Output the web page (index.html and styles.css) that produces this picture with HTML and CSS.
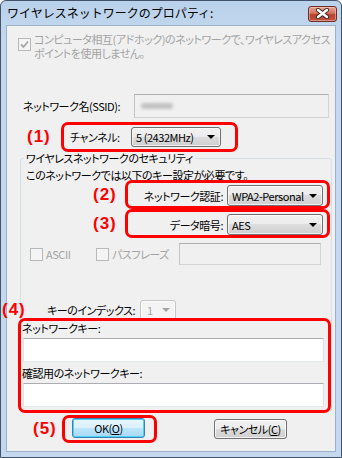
FILE: index.html
```html
<!DOCTYPE html>
<html lang="ja">
<head>
  <meta charset="UTF-8">
  <title>ワイヤレスネットワークのプロパティ</title>
  <link rel="stylesheet" href="styles.css">
</head>
<body>
  <div class="window">
    <div class="titlebar">
      <span class="title">ワイヤレスネットワークのプロパティ:</span>
      <span class="close-btn">
        <svg width="15" height="11" viewBox="0 0 15 11">
          <path d="M3 2 L12 9 M12 2 L3 9" stroke="#3a2a28" stroke-width="4.2" stroke-linecap="round"/>
          <path d="M3 2 L12 9 M12 2 L3 9" stroke="#fff" stroke-width="2.4" stroke-linecap="round"/>
        </svg>
      </span>
    </div>

    <div class="client">
      <div class="adhoc-row">
        <span class="checkbox disabled">
          <svg width="11" height="11" viewBox="0 0 11 11"><path d="M2 5.5 L4.5 8 L9 2.5" fill="none" stroke="#a7a7a7" stroke-width="1.8"/></svg>
        </span>
        <p class="adhoc-text disabled-text">コンピュータ相互(アドホック)のネットワークで、ワイヤレスアクセス<br>ポイントを使用しません。</p>
      </div>

      <div class="ssid-row">
        <span class="ssid-label">ネットワーク名(SSID):</span>
        <div class="textbox readonly ssid-box"><span class="blurred"></span></div>
      </div>

      <div class="anno-row channel-row">
        <span class="anno-num">(1)</span>
        <div class="red-box channel-box">
          <span class="channel-label">チャンネル:</span>
          <div class="combo channel-combo"><span>5 (2432MHz)</span><i class="arrow"></i></div>
        </div>
      </div>

      <fieldset class="security">
        <legend>ワイヤレスネットワークのセキュリティ</legend>
        <p class="security-note">このネットワークでは以下のキー設定が必要です。</p>

        <div class="anno-row setting-row auth-row">
          <span class="anno-num">(2)</span>
          <div class="red-box setting-box">
            <span class="setting-label">ネットワーク認証:</span>
            <div class="combo setting-combo"><span>WPA2-Personal</span><i class="arrow"></i></div>
          </div>
        </div>

        <div class="anno-row setting-row cipher-row">
          <span class="anno-num">(3)</span>
          <div class="red-box setting-box">
            <span class="setting-label">データ暗号:</span>
            <div class="combo setting-combo"><span>AES</span><i class="arrow"></i></div>
          </div>
        </div>

        <div class="ascii-row">
          <label class="check-item ascii-item"><span class="checkbox disabled"></span><span class="disabled-text">ASCII</span></label>
          <label class="check-item pass-item"><span class="checkbox disabled"></span><span class="disabled-text">パスフレーズ</span></label>
          <div class="textbox readonly pass-box"></div>
        </div>

        <div class="index-row">
          <span class="anno-num">(4)</span>
          <span class="index-label">キーのインデックス:</span>
          <div class="combo disabled-combo index-combo"><span>1</span><i class="arrow"></i></div>
        </div>

        <div class="red-box key-box">
          <p class="key-label">ネットワークキー:</p>
          <div class="textbox key-input"></div>
          <p class="key-label confirm-label">確認用のネットワークキー:</p>
          <div class="textbox key-input"></div>
        </div>
      </fieldset>

      <div class="anno-row button-row">
        <span class="anno-num">(5)</span>
        <div class="red-box ok-box">
          <button class="btn btn-default">OK(<u>O</u>)</button>
        </div>
        <button class="btn btn-cancel">キャンセル(<u>C</u>)</button>
      </div>
    </div>
  </div>
</body>
</html>
```

FILE: styles.css
```css
* {
  margin: 0;
  padding: 0;
  box-sizing: border-box;
}

body {
  font-family: "Noto Sans CJK JP", "Noto Sans", sans-serif;
  font-size: 11px;
  line-height: 14px;
  letter-spacing: -0.45px;
  color: #000;
  background: #fff;
  white-space: nowrap;
  font-feature-settings: "palt";
}

.window {
  width: 342px;
  height: 458px;
  display: flex;
  flex-direction: column;
  padding: 0 5px 5px;
  border: 1px solid #43536a;
  border-radius: 6px 6px 0 0;
  background: linear-gradient(to bottom, #b9d1ea, #c4d9ef 40px, #c4d9ef);
}

/* title bar */
.titlebar {
  height: 24px;
  flex: none;
  display: flex;
  align-items: center;
  justify-content: space-between;
  padding-left: 1px;
}

.title {
  font-size: 12px;
  font-feature-settings: normal;
  letter-spacing: 0;
  color: #000;
}

.close-btn {
  width: 29px;
  height: 16px;
  margin-right: -1px;
  margin-top: 1px;
  display: flex;
  align-items: center;
  justify-content: center;
  border: 1px solid #6b2e25;
  border-radius: 3px;
  background: linear-gradient(to bottom, #e6a393 0%, #d3735f 45%, #b7402a 55%, #c4553f 100%);
  box-shadow: inset 0 0 0 1px rgba(255, 220, 210, 0.45);
}

/* client area */
.client {
  flex: 1;
  min-height: 0;
  border: 1px solid #9cb1ca;
  background: #f0f0f0;
}

.disabled-text {
  color: #a3a3a3;
}

.checkbox {
  width: 13px;
  height: 13px;
  flex: none;
  display: flex;
  align-items: center;
  justify-content: center;
  border: 1px solid #8e8f8f;
  background: linear-gradient(to bottom right, #e9e9e9, #fafafa);
}

.checkbox.disabled {
  border-color: #b8b8b8;
  background: #f4f4f4;
}

.adhoc-row {
  display: flex;
  gap: 3px;
  padding: 6px 0 0 11px;
}

.adhoc-row .checkbox {
  margin-top: 6px;
}

.textbox {
  border: 1px solid #abadb3;
  border-color: #abadb3 #dbdfe6 #e3e9ef #e2e3ea;
  background: #fff;
}

.textbox.readonly {
  border-color: #b0b0b0 #d4d4d4 #d4d4d4 #c4c4c4;
  background: #f0f0f0;
}

.ssid-row {
  display: flex;
  align-items: center;
  margin-top: 34px;
  padding-left: 16px;
}

.ssid-label {
  width: 111px;
}

.ssid-box {
  width: 195px;
  height: 24px;
  display: flex;
  align-items: center;
  padding-left: 6px;
}

.blurred {
  width: 32px;
  height: 6px;
  background: #c2c2c2;
  border-radius: 3px;
  filter: blur(1.5px);
}

/* red annotations */
.anno-row {
  display: flex;
  align-items: center;
}

.anno-num {
  font-family: "Liberation Sans", sans-serif;
  font-size: 17px;
  font-weight: bold;
  letter-spacing: 1px;
  color: #ff0000;
  flex: none;
}

.red-box {
  position: relative;
  z-index: 1;
  display: flex;
  align-items: center;
  border: 3px solid #ff0000;
  border-radius: 7px;
}

/* combo boxes */
.combo {
  display: flex;
  align-items: center;
  justify-content: space-between;
  padding: 0 5px 0 4px;
  border: 1px solid #707070;
  border-radius: 3px;
  background: linear-gradient(to bottom, #f2f2f2 0%, #ebebeb 50%, #dddddd 50%, #cfcfcf 100%);
  box-shadow: inset 0 0 0 1px rgba(255, 255, 255, 0.7);
}

.arrow {
  width: 0;
  height: 0;
  border-left: 4px solid transparent;
  border-right: 4px solid transparent;
  border-top: 4px solid #000;
}

.disabled-combo {
  border-color: #c5c5c5;
  background: #f4f4f4;
  color: #a3a3a3;
}

.disabled-combo .arrow {
  border-top-color: #a3a3a3;
}

.channel-row {
  margin-top: 4px;
  padding-left: 20px;
}

.channel-row .anno-num {
  width: 34px;
}

.channel-box {
  width: 177px;
  height: 30px;
  padding-left: 6px;
}

.channel-label {
  width: 61px;
}

.channel-combo {
  width: 90px;
  height: 20px;
}

/* security group */
.security {
  margin: -1px 0 0 13px;
  width: 310px;
  padding: 0;
  border: 1px solid #d5dfe5;
  border-radius: 3px;
}

.security legend {
  margin-left: 3px;
  padding: 0 2px;
}

.security-note {
  margin: 3px 0 0 5px;
}

.setting-row {
  justify-content: flex-end;
  margin-right: 1px;
}

.auth-row {
  margin-top: -2px;
}

.setting-row .anno-num {
  width: 32px;
}

.setting-box {
  width: 205px;
  height: 29px;
  justify-content: flex-end;
  gap: 4px;
  padding: 2px 4px 0 0;
}

.setting-combo {
  width: 96px;
  height: 21px;
}

.ascii-row {
  display: flex;
  align-items: center;
  margin-top: 5px;
  padding-left: 9px;
}

.check-item {
  display: flex;
  align-items: center;
  gap: 3px;
}

.ascii-item {
  width: 66px;
}

.pass-item {
  width: 83px;
}

.pass-box {
  width: 142px;
  height: 22px;
}

.index-row {
  display: flex;
  align-items: center;
  margin-top: 35px;
}

.index-row .anno-num {
  width: 45px;
  margin-left: -19px;
}

.index-label {
  width: 93px;
}

.index-combo {
  width: 36px;
  height: 20px;
  padding: 0 5px 0 6px;
}

.key-box {
  display: block;
  width: 313px;
  margin: -2px 0 -2px -3px;
  padding-bottom: 3px;
}

.key-label {
  padding-left: 1px;
}

.confirm-label {
  margin-top: 4px;
}

.key-input {
  width: 301px;
  height: 24px;
  margin: 3px 0 0 2px;
}

/* buttons */
.button-row {
  margin-top: 3px;
  padding-left: 26px;
}

.button-row .anno-num {
  width: 29px;
}

.ok-box {
  height: 28px;
  align-items: flex-start;
  padding: 0 9px 0 7px;
}

.btn {
  width: 73px;
  height: 20px;
  font-family: inherit;
  font-size: 11px;
  letter-spacing: -0.45px;
  font-feature-settings: "palt";
  color: #000;
  border: 1px solid #707070;
  border-radius: 3px;
  background: linear-gradient(to bottom, #f2f2f2 0%, #ebebeb 50%, #dddddd 50%, #cfcfcf 100%);
  box-shadow: inset 0 0 0 1px rgba(255, 255, 255, 0.75);
}

.btn-default {
  border-color: #3c7fb1;
  background: linear-gradient(to bottom, #eaf6fd 0%, #d9f0fc 50%, #bee6fd 50%, #a7d9f5 100%);
  box-shadow: inset 0 0 0 1px #4bd2f8;
}

.btn-cancel {
  margin-left: 57px;
  margin-top: -1px;
}
```
